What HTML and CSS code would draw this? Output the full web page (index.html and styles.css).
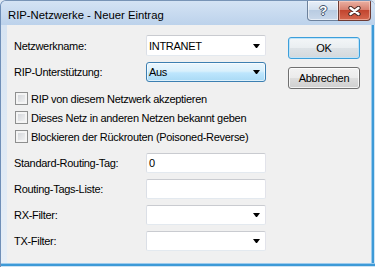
FILE: index.html
```html
<!DOCTYPE html>
<html lang="de">
<head>
  <meta charset="UTF-8">
  <meta name="viewport" content="width=device-width, initial-scale=1.0">
  <title>RIP-Netzwerke - Neuer Eintrag</title>
  <link rel="stylesheet" href="styles.css">
</head>
<body>
  <div class="window">
    <div class="titlebar">
      <span class="title">RIP-Netzwerke - Neuer Eintrag</span>
      <span class="capbtn help"><span class="q">?</span></span>
      <span class="capbtn close">
        <svg width="13" height="10" viewBox="0 0 13 10">
          <path d="M2.5 2 L10.5 8 M10.5 2 L2.5 8" stroke="#4b2b26" stroke-width="4.4" stroke-linecap="round" fill="none"/>
          <path d="M2.5 2 L10.5 8 M10.5 2 L2.5 8" stroke="#fff" stroke-width="2.4" stroke-linecap="round" fill="none"/>
        </svg>
      </span>
    </div>

    <div class="frame">
      <div class="edge-left"></div>
      <div class="client">
        <div class="form">
          <div class="row first">
            <label>Netzwerkname:</label>
            <div class="field combo">
              <span>INTRANET</span>
              <svg class="arrow" width="7" height="4" viewBox="0 0 7 4"><polygon points="0,0 7,0 4,4 3,4" fill="#000"/></svg>
            </div>
          </div>
          <div class="row">
            <label>RIP-Unterstützung:</label>
            <div class="field droplist">
              <span>Aus</span>
              <svg class="arrow" width="7" height="4" viewBox="0 0 7 4"><polygon points="0,0 7,0 4,4 3,4" fill="#000"/></svg>
            </div>
          </div>

          <div class="checks">
            <div class="check"><span class="box"></span>RIP von diesem Netzwerk akzeptieren</div>
            <div class="check"><span class="box"></span>Dieses Netz in anderen Netzen bekannt geben</div>
            <div class="check"><span class="box"></span>Blockieren der Rückrouten (Poisoned-Reverse)</div>
          </div>

          <div class="row">
            <label>Standard-Routing-Tag:</label>
            <div class="field edit"><span>0</span></div>
          </div>
          <div class="row">
            <label>Routing-Tags-Liste:</label>
            <div class="field edit"></div>
          </div>
          <div class="row">
            <label>RX-Filter:</label>
            <div class="field combo">
              <span></span>
              <svg class="arrow" width="7" height="4" viewBox="0 0 7 4"><polygon points="0,0 7,0 4,4 3,4" fill="#000"/></svg>
            </div>
          </div>
          <div class="row">
            <label>TX-Filter:</label>
            <div class="field combo">
              <span></span>
              <svg class="arrow" width="7" height="4" viewBox="0 0 7 4"><polygon points="0,0 7,0 4,4 3,4" fill="#000"/></svg>
            </div>
          </div>
        </div>

        <div class="buttons">
          <button class="btn default">OK</button>
          <button class="btn">Abbrechen</button>
        </div>
      </div>
      <div class="edge-right"></div>
    </div>
    <div class="edge-bottom"></div>
  </div>
</body>
</html>
```

FILE: styles.css
```css
html, body {
  margin: 0;
  padding: 0;
  background: #dfe9f4;
}
body {
  font-family: "Liberation Sans", Arial, sans-serif;
  font-size: 11px;
  letter-spacing: -0.3px;
  color: #000;
}
.window {
  width: 375px;
  height: 267px;
  box-sizing: border-box;
  display: flex;
  flex-direction: column;
  border-top: 1px solid #7894b6;
  border-left: 1px solid #6f8fb8;
  border-radius: 6px 6px 0 0;
  background: #c6d8ed;
  overflow: hidden;
}

/* caption */
.titlebar {
  height: 24px;
  display: flex;
  align-items: flex-start;
  padding: 0 4px 0 7px;
  background: linear-gradient(#d4e3f4, #bcd2eb);
}
.title {
  font-size: 11.3px;
  letter-spacing: 0;
  margin-top: 8px;
  flex: 1;
}
.capbtn {
  height: 20px;
  box-sizing: border-box;
  display: flex;
  align-items: center;
  justify-content: center;
}
.help {
  width: 32px;
  border: 1px solid #6c819c;
  border-top: none;
  border-radius: 0 0 0 4px;
  background: linear-gradient(#e8eff8 0%, #d3e0ef 45%, #b9cce2 50%, #c9d8ea 100%);
  box-shadow: inset 0 0 0 1px rgba(255, 255, 255, 0.55);
}
.q {
  font-weight: bold;
  font-size: 13px;
  color: #fff;
  margin-top: -1px;
  text-shadow: 1px 0 #43546c, -1px 0 #43546c, 0 1px #43546c, 0 -1px #43546c;
}
.close {
  width: 33px;
  margin-left: -1px;
  border: 1px solid #6e3b33;
  border-top: none;
  border-radius: 0 0 4px 0;
  background: linear-gradient(#eab0a2 0%, #d8806f 45%, #c2452f 50%, #d5684f 100%);
  box-shadow: inset 0 0 0 1px rgba(255, 220, 210, 0.5);
}

/* window body */
.frame {
  flex: 1;
  display: flex;
}
.edge-left {
  width: 6px;
  background: linear-gradient(#d7e4f2, #e6eef7);
}
.edge-right {
  width: 4px;
  background: linear-gradient(90deg, #9ccbed 0, #9ccbed 1px, #3d9ad7 1px, #3d9ad7 3px, #cde3f4 3px);
}
.edge-bottom {
  height: 4px;
  background: linear-gradient(#9ccbed 0, #9ccbed 1px, #3d9ad7 1px, #3d9ad7 3px, #cde3f4 3px);
}
.client {
  flex: 1;
  background: #f0f0f0;
  display: flex;
  padding: 10px 0 0 7px;
}

.form {
  width: 252px;
  display: flex;
  flex-direction: column;
  gap: 6px;
}
.row {
  height: 20px;
  display: flex;
  align-items: center;
}
.row.first {
  height: 21px;
}
.row label {
  width: 132px;
}
.field {
  width: 120px;
  height: 100%;
  box-sizing: border-box;
  display: flex;
  align-items: center;
  justify-content: space-between;
  padding: 0 5px 0 2px;
  border: 1px solid;
  border-color: #c9cbd0 #e2e3ea #e3e9ef #dbdfe6;
  border-radius: 2px;
  background: #fff;
}
.arrow {
  display: block;
}
.droplist {
  border-color: #3c7fb1;
  border-radius: 3px;
  background: linear-gradient(#eaf6fd 0%, #d9f0fc 45%, #bee6fd 55%, #a9daf5 100%);
  box-shadow: inset 0 0 0 1px rgba(255, 255, 255, 0.6);
}

.checks {
  display: flex;
  flex-direction: column;
  margin: 1px 0 1px;
}
.check {
  height: 19px;
  display: flex;
  align-items: center;
  padding-left: 1px;
}
.box {
  width: 13px;
  height: 13px;
  box-sizing: border-box;
  margin-right: 3px;
  border: 1px solid #8e8f8f;
  background: linear-gradient(135deg, #cdd0d5, #f7f7f7);
  box-shadow: inset 0 0 0 2px #f4f4f4;
}

/* dialog buttons */
.buttons {
  margin-left: 22px;
  padding-top: 2px;
  display: flex;
  flex-direction: column;
  gap: 8px;
}
.btn {
  width: 72px;
  height: 22px;
  padding: 0;
  font-family: "Liberation Sans", Arial, sans-serif;
  font-size: 11px;
  letter-spacing: -0.3px;
  color: #000;
  border: 1px solid #707070;
  border-radius: 3px;
  background: linear-gradient(#f2f2f2 0%, #ebebeb 48%, #dddddd 52%, #cfcfcf 100%);
  box-shadow: inset 0 0 0 1px rgba(255, 255, 255, 0.75);
}
.btn.default {
  border-color: #3c9fdb;
  box-shadow: inset 0 0 0 1px #bfe3f8;
  background: linear-gradient(#f3f6f8 0%, #eaeef1 48%, #dde2e6 52%, #d3d8dc 100%);
}
```
